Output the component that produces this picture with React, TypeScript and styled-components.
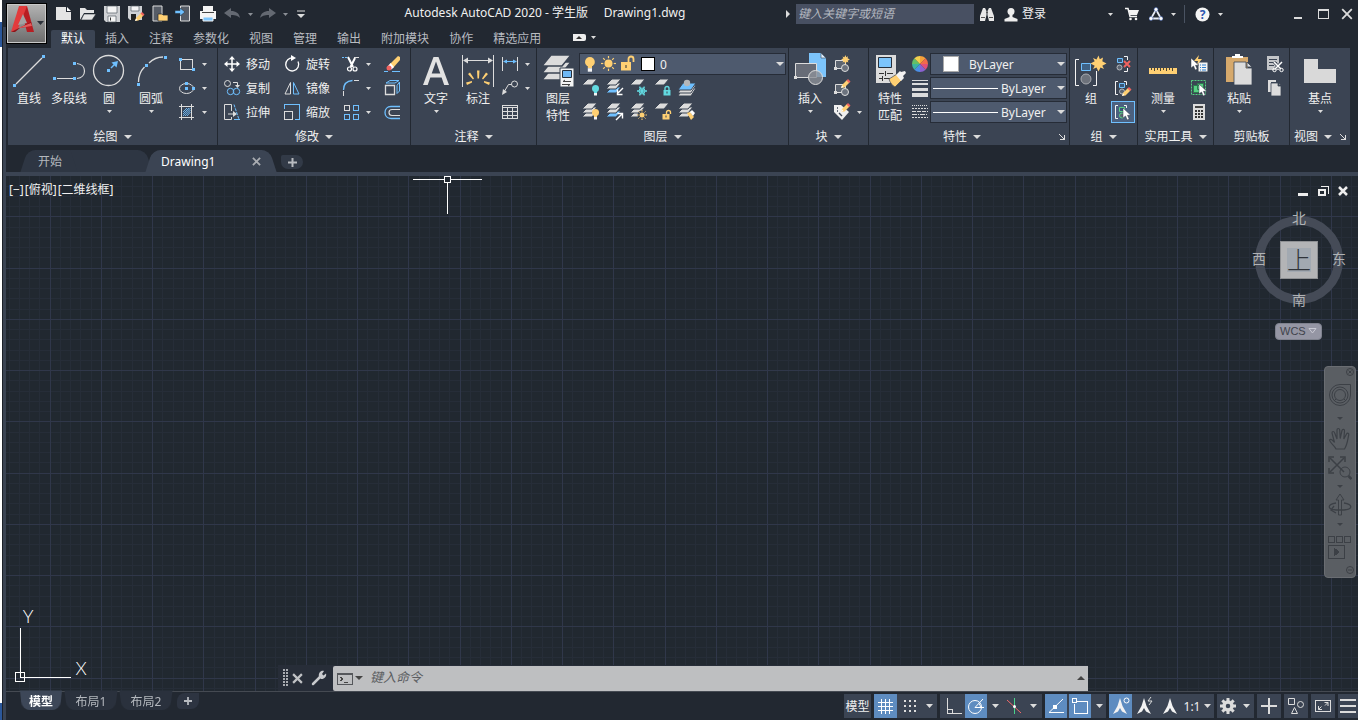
import React from "react";
import styled, { createGlobalStyle } from "styled-components";

const INK = "#dcdcdc";
const BLUE = "#6fc0ff";
const GOLD = "#ffd073";
const TEAL = "#62d9e0";
const SLATE = "#3b4453";
const NIGHT = "#222831";
const FIELD = "#4e5a6e";
const ACTIVE = "#5e8cc0";

const GlobalStyle = createGlobalStyle`
  * { box-sizing: border-box; }
  body {
    margin: 0;
    background: ${NIGHT};
    color: #f0f0f0;
    font: 12px/17px "Noto Sans", "Noto Sans CJK SC", sans-serif;
    overflow: hidden;
  }
  button, input, select { font: inherit; color: inherit; }
  button { border: 0; padding: 0; margin: 0; background: none; }
  svg { display: block; flex: none; }
`;

/* ---------- frame ---------- */

const Frame = styled.div`
  display: flex;
  height: 100vh;
`;
const EdgeStrip = styled.div`
  width: 2px;
  background: linear-gradient(#fff 22px, #2b579a 22px, #2b579a 47px, #fff 47px, #fff calc(100% - 17px), #2b579a calc(100% - 17px));
`;
const LeftRail = styled.div`
  width: 4px;
  margin-top: 27px;
  background: ${SLATE};
  border-left: 1px solid #1c2129;
`;
const Main = styled.div`
  flex: 1;
  min-width: 0;
  display: flex;
  flex-direction: column;
`;

/* ---------- header ---------- */

const Header = styled.header`
  display: flex;
  height: 48px;
`;
const AppButton = styled.button`
  width: 41px;
  height: 41px;
  margin-top: 3px;
  border: 1px solid #000;
  box-shadow: inset 0 0 0 1px #c9c9c9;
  background: linear-gradient(#b4b4b4, #8f8f8f 50%, #6c6c6c);
`;
const HeaderRows = styled.div`
  flex: 1;
  min-width: 0;
  display: flex;
  flex-direction: column;
`;
const TitleBar = styled.div`
  display: flex;
  align-items: center;
  height: 28px;
  padding-left: 5px;
`;
const Tool = styled.button<{ $w?: number }>`
  display: flex;
  align-items: center;
  justify-content: center;
  width: ${(p) => p.$w ?? 24}px;
  height: 24px;
`;
const Title = styled.h1`
  flex: 1;
  margin: 0;
  padding-bottom: 3px;
  font-size: 12px;
  font-weight: 400;
  text-align: center;
  white-space: pre;
`;
const SearchInput = styled.input`
  width: 178px;
  height: 20px;
  padding: 0 2px 2px;
  border: 0;
  background: #485062;
  &::placeholder { color: #b4b8c0; font-style: italic; opacity: 1; }
`;
const SignIn = styled.button`
  width: 80px;
  padding-bottom: 2px;
  text-align: left;
`;
const Divider = styled.span`
  width: 1px;
  height: 18px;
  margin: 0 5px;
  background: #4a5362;
`;
const WindowControls = styled.div`
  display: flex;
  margin-left: 60px;
`;
const RibbonTabs = styled.nav`
  display: flex;
  align-items: flex-end;
  height: 20px;
  padding-left: 4px;
`;
const RibbonTab = styled.button<{ $on?: boolean }>`
  height: 18px;
  padding: 0 10px 2px;
  border-radius: 2px 2px 0 0;
  color: ${(p) => (p.$on ? "#fff" : "#b9bcc1")};
  background: ${(p) => (p.$on ? SLATE : "none")};
`;
const MinimizeRibbon = styled.button`
  display: grid;
  place-items: center;
  width: 66px;
  height: 20px;
`;

/* ---------- ribbon ---------- */

const Ribbon = styled.section`
  display: flex;
  gap: 1px;
  height: 97px;
  padding-left: 2px;
`;
const PanelBox = styled.div<{ $w: number }>`
  flex: none;
  display: flex;
  flex-direction: column;
  width: ${(p) => p.$w}px;
  padding-top: 4px;
  background: ${SLATE};
`;
const PanelBody = styled.div<{ $pad?: number }>`
  display: flex;
  height: 76px;
  padding-left: ${(p) => p.$pad ?? 0}px;
`;
const PanelFooter = styled.div`
  display: flex;
  align-items: center;
  height: 17px;
`;
const FooterButton = styled.button`
  flex: 1;
  display: flex;
  align-items: center;
  justify-content: center;
  gap: 6px;
  white-space: nowrap;
`;
const Launcher = styled.button`
  width: 14px;
  height: 12px;
  display: grid;
  place-items: center;
`;
const BigButton = styled.button<{ $w?: number }>`
  display: flex;
  flex-direction: column;
  align-items: center;
  width: ${(p) => p.$w ?? 42}px;
  height: 76px;
  white-space: nowrap;
  & > svg:first-child { margin: 1px 0; }
`;
const ArrowSlot = styled.span`
  display: grid;
  place-items: center;
  height: 8px;
`;
const ToolGrid = styled.div<{ $cols: string; $left?: number }>`
  display: grid;
  grid-template-columns: ${(p) => p.$cols};
  grid-auto-rows: 24px;
  align-items: center;
  margin-left: ${(p) => p.$left ?? 0}px;
`;
const SmallButton = styled.button<{ $on?: boolean }>`
  display: flex;
  align-items: center;
  justify-content: ${(p) => (p.$on ? "center" : "flex-start")};
  gap: 5px;
  height: 22px;
  white-space: nowrap;
  ${(p) => p.$on && `width: 24px; margin-left: -3px; border: 1px solid ${BLUE}; background: #4b6180;`}
`;
const LayerTools = styled.div`
  flex: 1;
  padding-right: 2px;
`;
const IconRow = styled.div`
  display: flex;
`;
const Combo = styled.label`
  display: flex;
  align-items: center;
  height: 22px;
  margin: 1px 0;
  padding-right: 1px;
  border: 1px solid #262c37;
  background: ${FIELD};
`;
const ComboSelect = styled.select`
  appearance: none;
  flex: 1;
  min-width: 0;
  height: 20px;
  border: 0;
  padding: 0;
  margin-left: 3px;
  background: none;
`;
const Swatch = styled.span<{ $edge: string; $gap: string; $size: number }>`
  width: ${(p) => p.$size}px;
  height: ${(p) => p.$size}px;
  margin: ${(p) => p.$gap};
  border: 1px solid ${(p) => p.$edge};
  background: #fff;
`;
const Rule = styled.span`
  width: 65px;
  height: 1px;
  margin-left: 2px;
  background: #fff;
`;
const ComboStack = styled.div`
  flex: 1;
  display: grid;
  grid-auto-rows: 24px;
  padding-right: 2px;
  margin-left: 1px;
`;

/* ---------- document tabs ---------- */

const DocTabs = styled.nav`
  display: flex;
  align-items: flex-end;
  height: 26px;
  margin-top: 1px;
  padding-left: 18px;
`;
const DocTab = styled.div<{ $on?: boolean }>`
  position: relative;
  z-index: ${(p) => (p.$on ? 1 : 0)};
  display: flex;
  align-items: center;
  width: ${(p) => (p.$on ? 124 : 125)}px;
  height: 22px;
  padding: 0 12px 0 ${(p) => (p.$on ? 12 : 14)}px;
  color: ${(p) => (p.$on ? "#fff" : "#b4b8be")};
  &::before, &::after {
    content: "";
    position: absolute;
    z-index: -1;
    top: 0;
    bottom: 0;
    background: ${(p) => (p.$on ? SLATE : "#2e3643")};
  }
  &::before { left: 0; right: 40%; border-radius: 8px 0 0 0; transform: skewX(-18deg); }
  &::after { left: 40%; right: 0; border-radius: 0 8px 0 0; transform: skewX(18deg); }
`;
const DocName = styled.button`
  flex: 1;
  text-align: left;
`;
const AddTab = styled.button`
  display: grid;
  place-items: center;
  width: 22px;
  height: 14px;
  margin: 0 0 3px 8px;
  border-radius: 2px 8px 8px 8px;
  background: #323a47;
`;

/* ---------- drawing area ---------- */

const Canvas = styled.main`
  position: relative;
  flex: 1;
  min-height: 0;
  border-top: 4px solid ${SLATE};
  border-bottom: 1px solid #454a52;
  overflow: hidden;
`;
const GridSvg = styled.svg`
  width: 100%;
  height: 100%;
`;
const ViewLabel = styled.div`
  position: absolute;
  top: 5px;
  left: 3px;
  display: flex;
  gap: 1px;
`;
const Crosshair = styled.svg`
  position: absolute;
  left: 407px;
  top: 0;
`;
const UcsIcon = styled.svg`
  position: absolute;
  left: 8px;
  bottom: 3px;
  font: 300 18px/20px Lato, sans-serif;
`;
const DocControls = styled.div`
  position: absolute;
  top: 7px;
  right: 5px;
  display: flex;
  button { width: 20px; height: 16px; display: grid; place-items: center; }
`;
const ViewCube = styled.div`
  position: absolute;
  top: 33px;
  right: 9px;
  width: 100px;
  display: grid;
  grid-template: 20px 62px 20px / 20px 60px 20px;
  place-items: center;
  color: #b0b2b4;
  font-size: 14px;
`;
const Ring = styled.span`
  position: absolute;
  top: 7px;
  left: 6px;
  width: 88px;
  height: 88px;
  border: 9px solid #454b57;
  border-radius: 50%;
`;
const Heading = styled.span<{ $area: string }>`
  grid-area: ${(p) => p.$area};
  position: relative;
  padding-bottom: 3px;
`;
const TopFace = styled.button`
  grid-area: 2 / 2;
  position: relative;
  width: 38px;
  height: 38px;
  border: 1px solid #8f9194;
  background: linear-gradient(#a2a9b1, #a2a9b1) center / 24px 24px no-repeat #b3b4b6;
  color: #30343a;
  font-size: 24px;
  font-weight: 300;
  line-height: 32px;
`;
const WcsButton = styled.button`
  position: absolute;
  top: 147px;
  right: 36px;
  display: flex;
  align-items: center;
  justify-content: space-between;
  width: 47px;
  height: 17px;
  padding: 0 4px 2px 4px;
  border: 1px solid #7f828e;
  border-radius: 4px;
  background: #9596a4;
  color: #3f434b;
  font: 11px/14px "Liberation Sans", sans-serif;
`;
const NavBar = styled.nav`
  position: absolute;
  top: 190px;
  right: 2px;
  display: flex;
  flex-direction: column;
  align-items: center;
  width: 32px;
  height: 212px;
  border: 1px solid #6a6d72;
  border-radius: 4px;
  background: #5a5e63;
  color: #3c4046;
`;
const NavCorner = styled.button`
  display: grid;
  place-items: center;
  align-self: flex-end;
  width: 10px;
  height: 10px;
`;
const NavTool = styled.button<{ $h: number }>`
  display: grid;
  place-items: center;
  width: 30px;
  height: ${(p) => p.$h}px;
`;

const CommandLine = styled.div`
  position: absolute;
  left: 272px;
  right: 270px;
  bottom: 0;
  display: flex;
  align-items: center;
  height: 26px;
  padding-left: 3px;
  background: #272d38;
`;
const CommandField = styled.label`
  flex: 1;
  display: flex;
  align-items: center;
  height: 25px;
  padding: 0 3px;
  border-radius: 2px 0 0 2px;
  background: #bebfc1;
`;
const CommandInput = styled.input`
  flex: 1;
  min-width: 0;
  height: 22px;
  margin-left: 5px;
  padding: 0 0 2px;
  border: 0;
  background: none;
  color: #222;
  font-size: 13px;
  &::placeholder { color: #5c5e62; font-style: italic; opacity: 1; }
`;

/* ---------- bottom bar ---------- */

const BottomBar = styled.footer`
  display: flex;
  justify-content: space-between;
  height: 28px;
`;
const LayoutTabs = styled.nav`
  display: flex;
  gap: 1px;
  padding-left: 13px;
`;
const LayoutTab = styled.button<{ $on?: boolean }>`
  position: relative;
  z-index: 0;
  height: 18px;
  width: ${(p) => (p.$on ? 44 : 54)}px;
  padding-top: 1px;
  color: ${(p) => (p.$on ? "#fff" : "#b4b8be")};
  font-weight: ${(p) => (p.$on ? 700 : 400)};
  &::before {
    content: "";
    position: absolute;
    z-index: -1;
    inset: 0 3px;
    border-radius: 0 0 8px 8px;
    background: ${(p) => (p.$on ? "#3d4758" : "#2a313d")};
    transform: perspective(40px) rotateX(-12deg);
    transform-origin: bottom;
  }
`;
const AddLayout = styled.button`
  display: grid;
  place-items: center;
  width: 22px;
  height: 16px;
  margin: 1px 0 0 3px;
  border-radius: 8px 0 8px 4px;
  background: #2d3441;
`;
const StatusBar = styled.div`
  display: flex;
  gap: 3px;
  padding-top: 2px;
`;
const StatusGroup = styled.div<{ $gap?: number }>`
  display: flex;
  gap: ${(p) => p.$gap ?? 0}px;
  height: 24px;
  background: ${SLATE};
`;
const StatusButton = styled.button<{ $w: number; $on?: boolean }>`
  display: flex;
  align-items: center;
  justify-content: center;
  gap: 4px;
  width: ${(p) => p.$w}px;
  height: 24px;
  white-space: nowrap;
  background: ${(p) => (p.$on ? ACTIVE : "none")};
`;

/* ---------- drawing helpers ---------- */

type IcoProps = { w?: number; h?: number; crisp?: boolean; children: React.ReactNode };
const Ico = ({ w = 18, h = w, crisp, children }: IcoProps) => (
  <svg width={w} height={h} viewBox={`0 0 ${w} ${h}`} fill="none" stroke={INK} shapeRendering={crisp ? "crispEdges" : undefined} aria-hidden>
    {children}
  </svg>
);
const Big = ({ children, crisp }: { children: React.ReactNode; crisp?: boolean }) => (
  <Ico w={36} crisp={crisp}>{children}</Ico>
);
const Dot = ({ x, y }: { x: number; y: number }) => (
  <path d={`M${x} ${y}h3v3h-3z`} fill={BLUE} stroke="none" shapeRendering="crispEdges" />
);
const Down = ({ size = 5, color = INK }: { size?: number; color?: string }) => (
  <svg width={size} height={Math.ceil(size / 2)} viewBox="0 0 8 4" preserveAspectRatio="none" aria-hidden>
    <path d="M0 0h8L4 4z" fill={color} />
  </svg>
);
const Plus = ({ s = 9, color = "#b8bbc0" }: { s?: number; color?: string }) => (
  <svg width={s} height={s} viewBox="0 0 9 9" aria-hidden>
    <path d="M4.5 0v9M0 4.5h9" stroke={color} strokeWidth="2" />
  </svg>
);
const Cross = ({ s = 9, color = "#a9acb1", t = 2 }: { s?: number; color?: string; t?: number }) => (
  <svg width={s} height={s} viewBox="0 0 10 10" aria-hidden>
    <path d="M1 1l8 8M9 1L1 9" stroke={color} strokeWidth={t} />
  </svg>
);
const Pencil = ({ x = 0, y = 0 }: { x?: number; y?: number }) => (
  <g transform={`translate(${x} ${y})`} stroke="none">
    <path d="M0 9l1-3 5-5 2.500 2.500-5 5z" fill={GOLD} />
    <path d="M5.500 1.500L7 0l2.500 2.500L8 4z" fill="#f0625f" />
    <path d="M0 9l1-2.500 1.500 1.500z" fill="#fff" />
  </g>
);
const Cursor = ({ x, y }: { x: number; y: number }) => (
  <path transform={`translate(${x} ${y})`} d="M0 0v10l2.500-2 1.700 4 2-.900-1.700-3.800h3.300z" fill="#fff" stroke="#333b48" strokeWidth=".5" />
);
const Sheet = ({ y, fill = INK }: { y: number; fill?: string }) => (
  <path transform={`translate(0 ${y})`} d="M6 0h9l-5 6H0z" fill={fill} stroke={SLATE} strokeWidth="1" />
);
const Sheets = ({ last = INK }: { last?: string }) => (
  <>
    <Sheet y={8} fill={last} />
    <Sheet y={4} />
    <Sheet y={0} />
  </>
);
const Rays = ({ cx, cy, r, R, n = 8, color = GOLD, w = 1 }: { cx: number; cy: number; r: number; R: number; n?: number; color?: string; w?: number }) => (
  <g stroke={color} strokeWidth={w}>
    {Array.from({ length: n }, (_, i) => {
      const a = (i / n) * Math.PI * 2;
      return <line key={i} x1={cx + Math.cos(a) * r} y1={cy + Math.sin(a) * r} x2={cx + Math.cos(a) * R} y2={cy + Math.sin(a) * R} />;
    })}
  </g>
);
const Burst = ({ x, y, s = 1 }: { x: number; y: number; s?: number }) => (
  <path
    transform={`translate(${x} ${y}) scale(${s})`}
    d="M0-8l1.300 3.800L4.500-6 3.800-2.300 8 0 3.800 2.300 5.500 5.500 2 4 0 8-2 4-5.500 5.500-3.800 2.300-8 0-3.800-2.300-5.500-5.500-2-4z"
    fill={GOLD}
    stroke="none"
  />
);
const Padlock = ({ x, y, fill, open }: { x: number; y: number; fill: string; open?: boolean }) => (
  <g transform={`translate(${x} ${y})`}>
    <path d={open ? "M4.500 4V2.500a2 2 0 0 1 4 0V4" : "M2 4V2.500a2 2 0 0 1 4 0V4"} stroke={fill} strokeWidth="1.400" />
    <path d="M.5 4h7v5.500h-7z" fill={fill} stroke="none" />
    <path d="M4 5.500v2" stroke={SLATE} />
  </g>
);
const Bulb = ({ x, y, fill, s = 1 }: { x: number; y: number; fill: string; s?: number }) => (
  <g transform={`translate(${x} ${y}) scale(${s})`} stroke="none">
    <circle cx="3.500" cy="3.500" r="3.500" fill={fill} />
    <path d="M2 6h3v2H2z" fill={fill} />
    <path d="M2 8h3v2.500H2z" fill="#f4f4f4" />
  </g>
);

/* ---------- ribbon pieces ---------- */

const Panel = ({ w, title, arrow = true, launcher, pad, children }: { w: number; title: string; arrow?: boolean; launcher?: boolean; pad?: number; children: React.ReactNode }) => (
  <PanelBox $w={w}>
    <PanelBody $pad={pad}>{children}</PanelBody>
    <PanelFooter>
      <FooterButton>
        {title}
        {arrow && <Down size={8} />}
      </FooterButton>
      {launcher && (
        <Launcher aria-label={`${title}设置`}>
          <Ico w={6} crisp><path d="M0 0l5 5M5.500 1v5M1 5.500h5" /></Ico>
        </Launcher>
      )}
    </PanelFooter>
  </PanelBox>
);
const BigTool = ({ label, second, arrow, w, children }: { label: string; second?: string; arrow?: boolean; w?: number; children: React.ReactNode }) => (
  <BigButton $w={w}>
    {children}
    <span>{label}</span>
    {second && <span>{second}</span>}
    {arrow && <ArrowSlot><Down /></ArrowSlot>}
  </BigButton>
);
const Small = ({ name, text, on, children }: { name: string; text?: boolean; on?: boolean; children: React.ReactNode }) => (
  <SmallButton $on={on} aria-label={text ? undefined : name}>
    {children}
    {text && <span>{name}</span>}
  </SmallButton>
);
const More = ({ name }: { name: string }) => (
  <Tool $w={17} aria-label={name}><Down /></Tool>
);

const DrawPanel = () => (
  <Panel w={209} title="绘图">
    <BigTool label="直线">
      <Big><path d="M5 31L31 5" strokeWidth="1.300" /><Dot x={2} y={31} /><Dot x={31} y={2} /></Big>
    </BigTool>
    <BigTool label="多段线" w={38}>
      <Big><path d="M6 25.500h16M26 10.500c10 1 10 14 0 15" strokeWidth="1.200" /><Dot x={2} y={24} /><Dot x={22} y={24} /><Dot x={22} y={9} /></Big>
    </BigTool>
    <BigTool label="圆" arrow>
      <Big><circle cx="17.500" cy="17.500" r="15" strokeWidth="1.300" /><Dot x={16} y={16} /><path d="M20 15l5-5" stroke={BLUE} strokeWidth="1.500" /><path d="M27 8l-1.500 6.500-5-5z" fill={BLUE} stroke="none" /></Big>
    </BigTool>
    <BigTool label="圆弧" arrow>
      <Big><path d="M5.500 29c0-6 2-11 6-15M16 10c4-4 9-6 14-6" strokeWidth="1.300" /><Dot x={4} y={30} /><Dot x={12} y={11} /><Dot x={31} y={3} /></Big>
    </BigTool>
    <ToolGrid $cols="18px 17px" $left={6}>
      <Small name="矩形"><Ico crisp><path d="M2.500 4.500h12v10h-12z" /><Dot x={1} y={3} /><Dot x={14} y={13} /></Ico></Small>
      <More name="矩形选项" />
      <Small name="椭圆"><Ico><ellipse cx="8.500" cy="9.500" rx="7" ry="5" /><Dot x={7} y={3} /><Dot x={14} y={8} /><Dot x={7} y={8} /></Ico></Small>
      <More name="椭圆选项" />
      <Small name="图案填充"><Ico><path d="M1 3.500h15M1 14.500h15M3.500 1v16M13.500 1v16" shapeRendering="crispEdges" /><path d="M5 9l4-4M5 13l7.500-8M9 13l3.500-4M5 11l6-6M7 13l5.500-6" stroke={BLUE} strokeWidth=".9" /></Ico></Small>
      <More name="图案填充选项" />
    </ToolGrid>
  </Panel>
);

const ModifyPanel = () => (
  <Panel w={192} title="修改" pad={5}>
    <ToolGrid $cols="60px 59px 18px 23px 18px">
      <Small name="移动" text><Ico><path d="M9 3v12M3 9h12" strokeWidth="1.500" stroke="#fff" /><path d="M9 1l3 3.500H6zM9 17l3-3.500H6zM1 9l3.500-3v6zM17 9l-3.500-3v6z" fill="#fff" stroke="none" /></Ico></Small>
      <Small name="旋转" text><Ico><path d="M10 3a6.500 6.500 0 1 0 5 3.500" strokeWidth="1.300" stroke="#fff" /><path d="M8 0l5 3-5 3z" fill="#fff" stroke="none" /></Ico></Small>
      <Small name="修剪"><Ico><path d="M0 2.500h6" stroke={BLUE} strokeDasharray="2 1" /><path d="M12 2.500h5" /><path d="M6 2l5 10M13 3L8.500 12" stroke="#fff" strokeWidth="2" /><circle cx="7.500" cy="14" r="2" stroke="#fff" strokeWidth="1.200" /><circle cx="13" cy="14" r="2" stroke="#fff" strokeWidth="1.200" /></Ico></Small>
      <More name="修剪选项" />
      <Small name="删除"><Ico><path d="M7 9l8-8 2 1v3l-7 8z" fill={GOLD} stroke="none" /><path d="M5 11l2.500-3 3.500 4-2.500 2.500z" fill="#fff" stroke="none" /><circle cx="6" cy="13" r="2.500" fill="#f0625f" stroke="none" /><path d="M1 16.500h4M9 16.500h8" stroke={BLUE} /></Ico></Small>

      <Small name="复制" text><Ico><circle cx="4.500" cy="4.500" r="3" /><path d="M10 3.500h4.500V7" /><path d="M12 6h5l-2.500 3z" fill={INK} stroke="none" /><circle cx="7.500" cy="12.500" r="3.200" stroke={BLUE} /><circle cx="13.500" cy="12.500" r="3.200" stroke={BLUE} /></Ico></Small>
      <Small name="镜像" text><Ico><path d="M7.500 3.500v11.500H2z" /><path d="M10.500 3.500v11.500H16z" stroke={BLUE} /></Ico></Small>
      <Small name="圆角"><Ico><path d="M1.500 17v-5" /><path d="M1.500 11c0-6 3-9 9-9.500" stroke={BLUE} strokeWidth="1.300" /><path d="M12 1.500h5" /></Ico></Small>
      <More name="圆角选项" />
      <Small name="分解"><Ico><path d="M2.500 6.500h9v9h-9z" strokeWidth="1.300" /><path d="M3 4l4-2.500h9L12 4zM14 6.500L16.500 3v9L14 14.500z" stroke={BLUE} /></Ico></Small>

      <Small name="拉伸" text><Ico><path d="M8.500 8V1.500h-7v15h7V14M5 11h6" /><path d="M10 8l4 3-4 3z" fill={INK} stroke="none" /><path d="M11 1.500l5 15" stroke={BLUE} strokeDasharray="3 1" /><path d="M11 16.500h6" stroke={BLUE} /></Ico></Small>
      <Small name="缩放" text><Ico crisp><path d="M1.500 6V1.500h15v15H12" stroke={BLUE} /><path d="M1.500 8.500h8v8h-8z" /></Ico></Small>
      <Small name="阵列"><Ico crisp><path d="M2.500 2.500h5v5h-5z" /><path d="M11.500 2.500h5v5h-5zM2.500 11.500h5v5h-5zM11.500 11.500h5v5h-5z" stroke={BLUE} /></Ico></Small>
      <More name="阵列选项" />
      <Small name="偏移"><Ico><path d="M17 3.500H8c-8 0-8 12 0 12h9" stroke={BLUE} strokeWidth="1.300" /><path d="M17 6.500H9c-4 0-4 6 0 6h8" strokeWidth="1.200" /></Ico></Small>
    </ToolGrid>
  </Panel>
);

const AnnotatePanel = () => (
  <Panel w={125} title="注释" pad={4}>
    <BigTool label="文字" arrow>
      <Big><path d="M5 32L15.500 4h5L31 32h-4.800l-2.600-7.500H12.300L9.700 32zM13.700 20.500h8.600L18 8.500z" fill="#e2e2e2" stroke="none" fillRule="evenodd" /></Big>
    </BigTool>
    <BigTool label="标注">
      <Big><path d="M2.500 2v32M33.500 2v32M5 7.500h26" shapeRendering="crispEdges" /><path d="M3 7.500l5-3v6zM33 7.500l-5-3v6z" fill={INK} stroke="none" /><g fill={GOLD} stroke="none"><path d="M17 17.500h2.500l-.5 8h-1.500zM8 21l2-1.500 4 6-1 1zM28 21l-2-1.500-4 6 1 1zM6 29.500l6-1.500v1.500l-5 2.500zM30 29.500l-6-1.500v1.500l5 2.500z" /></g></Big>
    </BigTool>
    <ToolGrid $cols="18px 17px" $left={2}>
      <Small name="线性"><Ico><path d="M1.500 2v14M16.500 2v14" shapeRendering="crispEdges" /><path d="M4 6.500h10" stroke={BLUE} /><path d="M2 6.500l4-2v4zM16 6.500l-4-2v4z" fill={BLUE} stroke="none" /></Ico></Small>
      <More name="线性选项" />
      <Small name="引线"><Ico><circle cx="13.500" cy="5" r="3" /><path d="M10.500 5.500h-3L3 13" /><path d="M1 16l1-6 4 3z" fill={INK} stroke="none" /></Ico></Small>
      <More name="引线选项" />
      <Small name="表格"><Ico crisp><path d="M1.500 2.500h15v13h-15zM1.500 4.500h15M1.500 8.500h15M1.500 12.500h15M6.500 5v11M11.500 5v11" /></Ico></Small>
    </ToolGrid>
  </Panel>
);

const layerIcons: [string, React.ReactNode][][] = [
  [
    ["关闭图层", <><Sheet y={0} /><Bulb x={10} y={6} fill={TEAL} /></>],
    ["隔离图层", <><Sheets last={BLUE} /><path d="M17 9l-5 5M11.500 10.500v5h5" stroke="#fff" strokeWidth="1.400" /></>],
    ["冻结图层", <><Sheet y={0} /><Rays cx={12} cy={12} r={0} R={5} n={6} color={TEAL} w={1.500} /><circle cx="12" cy="12" r="3" stroke={TEAL} /></>],
    ["锁定图层", <><Sheet y={0} /><Padlock x={9} y={7} fill={TEAL} /></>],
    ["置为当前图层", <><path d="M5 9h13l-5 8H0z" fill={INK} stroke={SLATE} /><path d="M5 6h13l-5 8H0z" fill={INK} stroke={SLATE} /><path d="M5 4h13l-5 7H0z" fill={BLUE} stroke={SLATE} /><circle cx="9" cy="4" r="3.200" fill="#b5b7ba" stroke="none" /></>],
  ],
  [
    ["打开所有图层", <><Sheets /><Bulb x={10} y={6} fill={GOLD} /></>],
    ["取消隔离图层", <><Sheets last={BLUE} /><path d="M10 17l6-6M11.500 10.500h5v5" stroke="#fff" strokeWidth="1.400" /></>],
    ["解冻所有图层", <><Sheets /><circle cx="12" cy="12" r="4.500" fill={SLATE} stroke="none" /><circle cx="12" cy="12" r="2.500" fill={GOLD} stroke="none" /><Rays cx={12} cy={12} r={3.500} R={5} /></>],
    ["解锁图层", <><Sheet y={0} /><Padlock x={8} y={7} fill={GOLD} open /></>],
    ["匹配图层", <><Sheets /><path d="M9 10l3-1 4 5-3 3z" fill={GOLD} stroke="none" /><path d="M12 9l2-2 3 3-2 3z" fill="#fff" stroke="none" /></>],
  ],
];

const LayerPanel = () => (
  <Panel w={251} title="图层">
    <BigTool label="图层" second="特性">
      <Big>
        {[16, 9, 2].map((y) => (
          <path key={y} transform={`translate(0 ${y})`} d="M11 0h20l-9 11H2z" fill={INK} stroke={SLATE} strokeWidth="1.500" />
        ))}
        <path d="M20 15h14v19H20z" fill="#f4f4f4" stroke={SLATE} />
        <path d="M22.500 17.500h9v7h-9z" fill="#6fb8f5" stroke="#26303c" />
        <path d="M23 28.500h8M22 31.500h8M25 27l-2 1.500M28 33l2-1.500" stroke="#444" />
      </Big>
    </BigTool>
    <LayerTools>
      <Combo>
        <Ico w={62} h={20}>
          <Bulb x={5} y={3} fill={GOLD} s={1.400} />
          <circle cx="28.500" cy="9.500" r="4" fill={GOLD} stroke="none" />
          <Rays cx={28.500} cy={9.500} r={5.200} R={7.500} w={1.200} />
          <path d="M41 8h10v8.500H41z" fill={GOLD} stroke="none" />
          <path d="M48.500 8V5a2.500 2.500 0 0 1 5 0v3" stroke={GOLD} strokeWidth="1.800" />
          <path d="M46 11v3" stroke="#333" />
        </Ico>
        <Swatch $edge="#000" $size={14} $gap="0 2px 0 -1px" />
        <ComboSelect aria-label="图层"><option>0</option></ComboSelect>
        <Down size={8} />
      </Combo>
      {layerIcons.map((row, i) => (
        <IconRow key={i}>
          {row.map(([name, art]) => (
            <Tool key={name} aria-label={name}><Ico>{art}</Ico></Tool>
          ))}
        </IconRow>
      ))}
    </LayerTools>
  </Panel>
);

const BlockArt = () => (
  <>
    <path d="M2.500 5.500h10v8h-10z" fill="#5c6470" />
    <circle cx="12" cy="13" r="3.500" fill="#6b727d" />
    <path d="M1 12h3v3H1z" fill={INK} stroke="none" />
  </>
);
const BlockPanel = () => (
  <Panel w={79} title="块">
    <BigTool label="插入" arrow>
      <Big>
        <path d="M17 0h12l5 5v19H17z" fill="#7cc4fb" stroke="none" />
        <path d="M29 0v5h5z" fill="#dff0ff" stroke={SLATE} strokeWidth=".6" />
        <path d="M3.500 10.500h21v14h-21z" fill="#676c77" />
        <circle cx="23.500" cy="24.500" r="7" fill="#8c9097" fillOpacity=".8" />
        <path d="M2 23h3v3H2z" fill={INK} stroke="none" />
      </Big>
    </BigTool>
    <ToolGrid $cols="18px 17px" $left={2}>
      <Small name="创建块"><Ico><BlockArt /><Burst x={12.500} y={4.500} s={0.550} /></Ico></Small><span />
      <Small name="编辑块"><Ico><BlockArt /><Pencil x={8} y={0} /></Ico></Small><span />
      <Small name="编辑属性"><Ico><path d="M1 2h7l8 7-7 8-8-8z" fill="#f0f0f0" stroke="none" /><path d="M4 5h1M4 8h1M6 10l3 3" stroke={SLATE} strokeWidth="1.400" /><Pencil x={8} y={0} /></Ico></Small>
      <More name="块属性选项" />
    </ToolGrid>
  </Panel>
);

const wheel = ["#f6a13a", "#f26a4b", "#e04f7a", "#8a62d0", "#4b8fe6", "#3cb5a0", "#63c067", "#f3d04e"];
const PropertiesPanel = () => (
  <Panel w={200} title="特性" launcher>
    <BigTool label="特性" second="匹配">
      <Big>
        <path d="M4 2h20v28H4z" fill={INK} stroke="none" />
        <path d="M6.500 4.500h13v10h-13z" fill="#7cc4fb" stroke="#26303c" />
        <path d="M7 20.500h5M15 20.500h6M7 25.500h3M12 25.500h6M13.500 18v5M10.500 23v5" stroke="#333" />
        <path d="M17 26l8-5 5 6-7 7c-2-1-5-4-6-8z" fill={GOLD} stroke={SLATE} strokeWidth=".7" />
        <path d="M24 22l4-4 1 1 4-1 1 2-3 3 1 2-3 3z" fill="#f2f2f2" stroke="none" />
      </Big>
    </BigTool>
    <ToolGrid $cols="18px">
      <Small name="对象颜色">
        <Ico>
          {wheel.map((c, i) => {
            const p = (k: number) => `${9 + 8 * Math.sin((k * Math.PI) / 4)} ${9 - 8 * Math.cos((k * Math.PI) / 4)}`;
            return <path key={c} d={`M9 9L${p(i)}A8 8 0 0 1 ${p(i + 1)}z`} fill={c} stroke="none" />;
          })}
        </Ico>
      </Small>
      <Small name="线宽"><Ico crisp><path d="M1 1.500h16" /><path d="M1 5h16" strokeWidth="2" /><path d="M1 10h16" strokeWidth="3" /><path d="M1 15.500h16" strokeWidth="4" /></Ico></Small>
      <Small name="线型"><Ico crisp><path d="M1 2.500h16" strokeDasharray="1 1" /><path d="M1 5.500h16" strokeDasharray="2 1" /><path d="M1 8.500h16" strokeDasharray="4 1" /><path d="M1 11.500h16" strokeDasharray="5 1 1 1" /><path d="M1 14.500h16" strokeDasharray="2 1" /></Ico></Small>
    </ToolGrid>
    <ComboStack>
      <Combo><Swatch $edge="#aaa" $size={16} $gap="0 7px 0 12px" /><ComboSelect aria-label="颜色"><option>ByLayer</option></ComboSelect><Down size={8} /></Combo>
      <Combo><Rule /><ComboSelect aria-label="线宽"><option>ByLayer</option></ComboSelect><Down size={8} /></Combo>
      <Combo><Rule /><ComboSelect aria-label="线型"><option>ByLayer</option></ComboSelect><Down size={8} /></Combo>
    </ComboStack>
  </Panel>
);

const GroupArt = ({ color = BLUE }: { color?: string }) => (
  <>
    <path d="M4 2.500H1.500v13H4" stroke="#f4f4f4" />
    <path d="M5.500 4.500h5v4h-5z" stroke={color} fill="#3a5878" />
    <circle cx="8" cy="12.500" r="2.500" stroke={color === BLUE ? "#b5b8bd" : color} fill="#5d6572" />
  </>
);
const GroupPanel = () => (
  <Panel w={67} title="组">
    <BigTool label="组">
      <Big>
        <path d="M6 6.500H2.500v26H6M20 32.500h3.500V18" stroke="#f4f4f4" />
        <path d="M8.500 10.500h9v7h-9z" stroke={BLUE} fill="#3f6285" />
        <circle cx="13" cy="26" r="5" fill="#6d727b" stroke="#a9acb1" />
        <Burst x={25.500} y={10.500} />
      </Big>
    </BigTool>
    <ToolGrid $cols="18px" $left={2}>
      <Small name="解除编组"><Ico><path d="M3.500 3.500h5v4h-5z" stroke={BLUE} fill="#3a5878" /><circle cx="5.500" cy="12.500" r="2.500" fill="#5d6572" stroke="#b5b8bd" /><path d="M10 1.500h3.500V5M13.500 13v3.500H10" stroke="#f4f4f4" /><path d="M10 6l6 6M16 6l-6 6" stroke="#f0625f" strokeWidth="2" /></Ico></Small>
      <Small name="组编辑"><Ico><GroupArt /><path d="M10 2.500h2.500V6" stroke="#f4f4f4" /><Pencil x={8} y={8} /></Ico></Small>
      <Small name="启用组选择" on><Ico><GroupArt color="#57cf83" /><path d="M10 2.500h2.500V5" stroke="#f4f4f4" /><Cursor x={9} y={5} /></Ico></Small>
    </ToolGrid>
  </Panel>
);

const UtilityPanel = () => (
  <Panel w={75} title="实用工具" pad={4}>
    <BigTool label="测量" arrow>
      <Big crisp><path d="M4 15h28v6H4z" fill={GOLD} stroke="none" /><path d="M6.500 15v2M9.500 15v3M12.500 15v2M15.500 15v3M18.500 15v2M21.500 15v3M24.500 15v2M27.500 15v3" stroke="#4a4636" /></Big>
    </BigTool>
    <ToolGrid $cols="18px" $left={6}>
      <Small name="快速选择"><Ico><path d="M9 0L4 6h4l-1 4 5-6H8z" fill={GOLD} stroke="none" /><path d="M8.500 7.500h9v9h-9z" fill="#f4f4f4" stroke="none" /><path d="M10 10h1M10 12.500h1M10 15h1M12 10h4M12 12.500h4M12 15h4" stroke="#2d7fd0" /><Cursor x={1} y={3} /></Ico></Small>
      <Small name="全部选择"><Ico><path d="M1.500 1.500h14v14h-14z" stroke="#57cf83" strokeDasharray="2 1" /><path d="M3.500 6.500h7v7h-7zM7.500 4.500h6v6h-6z" fill="#57cf83" stroke="#2c7a4d" /><Cursor x={9} y={5} /></Ico></Small>
      <Small name="快速计算器"><Ico crisp><path d="M3 1h12v16H3z" fill={INK} stroke="none" /><path d="M5 4h8" stroke="#444" strokeWidth="2" /><path d="M5 8h8M5 11h8M5 14h8" stroke="#333" strokeWidth="2" strokeDasharray="2 1" /></Ico></Small>
    </ToolGrid>
  </Panel>
);

const Page = ({ x, y, w, h }: { x: number; y: number; w: number; h: number }) => {
  const f = Math.round(w / 3);
  return <path d={`M${x} ${y}h${w - f}v${f}h${f}v${h - f}h${-w}zM${x + w - f + 1} ${y}v${f - 1}h${f - 1}z`} fill={INK} stroke={SLATE} strokeWidth=".8" />;
};
const ClipboardPanel = () => (
  <Panel w={75} title="剪贴板" arrow={false} pad={4}>
    <BigTool label="粘贴" arrow>
      <Big><path d="M5 4h22v25H5z" fill="#d6a96c" stroke="none" /><path d="M11 5V3h3V1h5v2h3v2z" fill="#fff" stroke="none" /><Page x={13} y={9} w={18} h={23} /></Big>
    </BigTool>
    <ToolGrid $cols="18px" $left={6}>
      <Small name="剪切"><Ico><path d="M1 1h12v14H1z" fill="#c4c6c9" stroke="none" /><path d="M3 4.500h8M3 7.500h8M3 10.500h5" stroke={SLATE} /><path d="M8 7l7 7M16 7l-7 7" stroke={SLATE} strokeWidth="3" /><path d="M8 7l7 7M16 7l-7 7" stroke="#fff" strokeWidth="1.500" /><circle cx="8.500" cy="15" r="1.700" stroke="#fff" /><circle cx="15.500" cy="15" r="1.700" stroke="#fff" /></Ico></Small>
      <Small name="复制剪裁"><Ico><path d="M2 1h8v2H5v10H2z" fill={INK} stroke="none" /><Page x={5} y={4} w={10} h={13} /></Ico></Small>
    </ToolGrid>
  </Panel>
);

const ViewPanel = () => (
  <Panel w={60} title="视图" launcher pad={9}>
    <BigTool label="基点" arrow>
      <Big crisp><path d="M2 6h14v10h18v14H2z" fill="#d9d9d9" stroke="none" /></Big>
    </BigTool>
  </Panel>
);

/* ---------- header pieces ---------- */

const quickTools: [string, React.ReactNode][] = [
  ["新建", <><path d="M1 2h10v5h5v8H1z" fill="#e4e4e4" stroke="none" /><path d="M12 2l4 4h-4z" fill="#fff" stroke="none" /></>],
  ["打开", <><path d="M1 15V3h5l2 2h7v3H5z" fill="#e4e4e4" stroke="none" /><path d="M5 9h12l-4 6H2z" fill="#e4e4e4" stroke={NIGHT} strokeWidth=".6" /></>],
  ["保存", <><path d="M1 1h16v16H3l-2-2z" fill="#cfd1d4" stroke="none" /><path d="M4 1h10v7H4z" fill="#f4f4f4" stroke="#555b66" strokeWidth=".7" /><path d="M5 11h8v6H5z" fill="#f4f4f4" stroke="#555b66" strokeWidth=".7" /><path d="M7.500 12.500v3" stroke="#333" /></>],
  ["另存为", <><path d="M1 1h14v14H3l-2-2z" fill="#cfd1d4" stroke="none" /><path d="M4 1h8v5H4z" fill="#f4f4f4" stroke="#555b66" strokeWidth=".7" /><path d="M4 9h5v6H4z" fill="#222" stroke="none" /><Pencil x={8} y={7} /></>],
  ["从移动设备打开", <><path d="M2 1h9v15H2z" fill="#565c66" stroke="#dcdcdc" /><path d="M7 9h4l1 1h5v6H7z" fill={GOLD} stroke={NIGHT} strokeWidth=".7" /></>],
  ["保存到移动设备", <><path d="M5.500 1h9v15h-9z" fill="#565c66" stroke="#dcdcdc" /><path d="M0 5.500h5V3l5 4-5 4V8.500H0z" fill={BLUE} stroke={NIGHT} strokeWidth=".5" /></>],
  ["打印", <><path d="M4 1h10v5H4zM1 6h16v8H1z" fill="#f4f4f4" stroke="none" /><path d="M3 7.500h12" stroke="#444" /><path d="M4 12h10v4H4z" fill="#7cc4fb" stroke="#f4f4f4" /></>],
];

const AppLogo = () => (
  <Ico w={39}>
    <path d="M13 2h7l7 26h-7z" fill="#b81d22" stroke="none" />
    <path d="M12 2h8l-9 23-7 3z" fill="#e23b3c" stroke="none" />
    <path d="M4 28l20-10 1 4-12 2-5 4z" fill="#8f1318" stroke="none" />
    <path d="M16 10l4 9-9 2z" fill="#a3a3a3" stroke="none" />
    <path d="M11 24l13-5 1 3-12 2z" fill="#e65a5a" stroke="none" />
    <path d="M30 17h7l-3.500 4z" fill="#2c313a" stroke="none" />
  </Ico>
);

const ribbonTabs = ["默认", "插入", "注释", "参数化", "视图", "管理", "输出", "附加模块", "协作", "精选应用"];

const TopHeader = () => (
  <Header>
    <AppButton aria-label="应用程序菜单"><AppLogo /></AppButton>
    <HeaderRows>
      <TitleBar>
        {quickTools.map(([name, art]) => (
          <Tool key={name} aria-label={name}><Ico>{art}</Ico></Tool>
        ))}
        <Tool aria-label="放弃"><Ico><path d="M1 8l7-5v3c5 0 8 2 9 7-2-2-4-3-9-3v3z" fill="#646972" stroke="none" /></Ico></Tool>
        <Tool $w={12} aria-label="放弃列表"><Down color="#8b8f96" /></Tool>
        <Tool aria-label="重做"><Ico><path d="M17 8l-7-5v3c-5 0-8 2-9 7 2-2 4-3 9-3v3z" fill="#646972" stroke="none" /></Ico></Tool>
        <Tool $w={11} aria-label="重做列表"><Down color="#8b8f96" /></Tool>
        <Tool $w={20} aria-label="自定义快速访问工具栏"><Ico w={8} h={8}><path d="M0 1h8" /><path d="M0 4h8L4 8z" fill={INK} stroke="none" /></Ico></Tool>
        <Title>{"Autodesk AutoCAD 2020 - 学生版     Drawing1.dwg"}</Title>
        <Tool $w={17} aria-label="折叠搜索"><Ico w={4} h={8}><path d="M0 0l4 4-4 4z" fill={INK} stroke="none" /></Ico></Tool>
        <SearchInput type="search" placeholder="键入关键字或短语" aria-label="搜索" />
        <Tool $w={26} aria-label="查找"><Ico w={14} h={14}><path d="M3 1h2l1.500 3v4L5 14H0V9zM11 1H9L7.500 4v4L9 14h5V9z" fill="#e8e8e8" stroke="none" /><path d="M6 5.500h2M1 10.500h4M9 10.500h4" stroke="#555" /></Ico></Tool>
        <Tool $w={22} aria-label="用户"><Ico w={14} h={15}><circle cx="7" cy="4.500" r="3.500" fill="#eee" stroke="none" /><path d="M5.500 7h3v3l5 2v2.500H.5V12l5-2z" fill="#eee" stroke="none" /></Ico></Tool>
        <SignIn>登录</SignIn>
        <Tool $w={17} aria-label="登录选项"><Down /></Tool>
        <Tool $w={26} aria-label="App Store"><Ico w={14} h={14}><path d="M0 1.500h3l2 8h7" strokeWidth="1.500" stroke="#f4f4f4" /><path d="M3.500 3H14l-2 5H5z" fill="#f4f4f4" stroke="none" /><circle cx="5.500" cy="12" r="1.300" fill="#f4f4f4" stroke="none" /><circle cx="11" cy="12" r="1.300" fill="#f4f4f4" stroke="none" /></Ico></Tool>
        <Tool $w={22} aria-label="保持连接"><Ico w={14} h={14}><path d="M7 2.500l5 9H2z" stroke="#e8ecf5" strokeWidth="1.800" /><circle cx="7" cy="2.500" r="2" fill="#fff" stroke="#3b5ba8" strokeWidth=".6" /><circle cx="2" cy="11.500" r="2" fill="#fff" stroke="#3b5ba8" strokeWidth=".6" /><circle cx="12" cy="11.500" r="2" fill="#fff" stroke="#3b5ba8" strokeWidth=".6" /></Ico></Tool>
        <Tool $w={12} aria-label="连接选项"><Down /></Tool>
        <Divider />
        <Tool $w={24} aria-label="帮助">
          <Ico w={15}><circle cx="7.500" cy="7.500" r="7" fill="#f4f4f4" stroke="none" /><text x="7.500" y="12" textAnchor="middle" fontSize="12" fontWeight="700" fill="#2d56b0" stroke="none">?</text></Ico>
        </Tool>
        <Tool $w={12} aria-label="帮助选项"><Down /></Tool>
        <WindowControls>
          <Tool aria-label="最小化"><Ico w={12} crisp><path d="M2 10h8" strokeWidth="2" /></Ico></Tool>
          <Tool $w={26} aria-label="最大化"><Ico w={12} crisp><path d="M1.500 1.500h10v9h-10z" /><path d="M1 2h11" /></Ico></Tool>
          <Tool $w={22} aria-label="关闭"><Cross s={12} color={INK} t={1.500} /></Tool>
        </WindowControls>
      </TitleBar>
      <RibbonTabs>
        {ribbonTabs.map((t, i) => <RibbonTab key={t} $on={i === 0}>{t}</RibbonTab>)}
        <MinimizeRibbon aria-label="最小化功能区">
          <Ico w={24} h={8}><path d="M1 0h11a2 2 0 0 1 2 2v3a2 2 0 0 1-2 2H1z" fill="#eee" stroke="none" /><path d="M4 5l3-3 3 3z" fill="#333" stroke="none" /><path d="M19 2h5l-2.500 3z" fill={INK} stroke="none" /></Ico>
        </MinimizeRibbon>
      </RibbonTabs>
    </HeaderRows>
  </Header>
);

/* ---------- drawing area pieces ---------- */

const TILE = 205;
const DrawingGrid = () => {
  const steps = Array.from({ length: 20 }, (_, i) => ({ at: Math.floor((i * TILE) / 20) + 0.5, major: i % 5 === 0 }));
  const draw = (major: boolean) =>
    steps.filter((s) => s.major === major).map((s) => <path key={s.at} d={`M${s.at} 0V${TILE}M0 ${s.at}H${TILE}`} stroke={major ? "#30374a" : "#262d38"} />);
  return (
    <GridSvg aria-hidden>
      <defs>
        <pattern id="grid" width={TILE} height={TILE} x={44} y={92} patternUnits="userSpaceOnUse">
          {draw(false)}
          {draw(true)}
        </pattern>
      </defs>
      <rect width="100%" height="100%" fill="#212830" />
      <rect width="100%" height="100%" fill="url(#grid)" />
    </GridSvg>
  );
};

const NavArrow = () => <NavTool $h={10} aria-label="更多导航选项"><Down color="#3c4046" size={6} /></NavTool>;
const Navigation = () => (
  <NavBar aria-label="导航栏">
    <NavCorner aria-label="关闭导航栏"><Ico w={8}><circle cx="4" cy="4" r="3.500" stroke="currentColor" /><path d="M2.500 2.500l3 3M5.500 2.500l-3 3" stroke="currentColor" /></Ico></NavCorner>
    <NavTool $h={36} aria-label="全导航控制盘"><Ico w={24}><g stroke="currentColor"><path d="M12 1.500h10.500V12A10.500 10.500 0 1 1 12 1.500z" /><circle cx="12" cy="12" r="8" /><circle cx="12" cy="12" r="5.500" /><path d="M8 16l-2 2M16 16l2 2" /></g></Ico></NavTool>
    <NavArrow />
    <NavTool $h={32} aria-label="平移"><Ico w={24}><path d="M8 22C6 18 2 16 1.500 13c1.500-1.500 3 0 5 2.500L4 6c0-2 2-2 2.700 0L9 12V3c0-2 2.500-2 2.700 0l.5 8.500L14 3.500c.5-1.700 2.800-1.300 2.500.5L15.800 12l2.700-5c1-1.500 2.800-.5 2.200 1-1 4-1 9-4.200 14z" stroke="currentColor" strokeWidth="1.200" /></Ico></NavTool>
    <NavTool $h={26} aria-label="范围缩放"><Ico w={24}><g stroke="currentColor"><path d="M2 2l14 14M16 2L2 16" strokeWidth="1.500" /><path d="M1 6V1h5M12 1h5v5M1 12v5h5" strokeWidth="1.500" /><circle cx="17" cy="16" r="5" /><path d="M20.500 20l3 3" strokeWidth="2.500" /></g></Ico></NavTool>
    <NavArrow />
    <NavTool $h={28} aria-label="动态观察"><Ico w={24}><g stroke="currentColor"><path d="M10.500 22V7H8l4-6 4 6h-2.500v15z" /><path d="M8 10c-9 1.500-9 6 0 7h8c9-1 9-5.500 0-7M6 13l-3 4 5 3" strokeWidth="1.300" /></g></Ico></NavTool>
    <NavArrow />
    <NavTool $h={36} aria-label="ShowMotion"><Ico w={24} h={26} crisp><g stroke="currentColor"><path d="M.5 2.500h6v6h-6zM8.500 2.500h6v6h-6zM16.500 2.500h6v6h-6zM.5 11.500h16v13h-16z" /><path d="M6 14v8l5-4z" fill="currentColor" /></g></Ico></NavTool>
    <NavCorner aria-label="导航栏选项"><Ico w={8}><circle cx="4" cy="4" r="3.500" stroke="currentColor" /><path d="M2 4h4" stroke="currentColor" /></Ico></NavCorner>
  </NavBar>
);

const DrawingArea = () => (
  <Canvas>
    <DrawingGrid />
    <ViewLabel><button>[−]</button><button>[俯视]</button><button>[二维线框]</button></ViewLabel>
    <Crosshair width="70" height="38" viewBox="0 0 70 38" fill="none" stroke="#fff" shapeRendering="crispEdges">
      <path d="M0 3.500h31M38 3.500h31M34.500 7v31M31.500.5h6v6h-6z" />
    </Crosshair>
    <DocControls>
      <button aria-label="最小化图形"><Ico w={12} crisp><path d="M1 9h10" stroke="#eee" strokeWidth="3" /></Ico></button>
      <button aria-label="还原图形"><Ico w={12} crisp><path d="M4 1.500h7.500V9" stroke="#eee" /><path d="M2 5h6v5H2z" stroke="#eee" strokeWidth="2" /></Ico></button>
      <button aria-label="关闭图形"><Cross s={10} color="#eee" t={2.500} /></button>
    </DocControls>
    <ViewCube>
      <Ring />
      <Heading $area="1 / 2">北</Heading>
      <Heading $area="2 / 1">西</Heading>
      <TopFace>上</TopFace>
      <Heading $area="2 / 3">东</Heading>
      <Heading $area="3 / 2">南</Heading>
    </ViewCube>
    <WcsButton>WCS<Ico w={9} h={6}><path d="M1 .500h7L4.500 5z" stroke="#c9cad3" /></Ico></WcsButton>
    <Navigation />
    <UcsIcon width="84" height="92" viewBox="0 -12 84 92" fill="none" stroke="#fff">
      <path d="M6.500 20v45M11 69.500h46M1.500 64.500h9v9h-9zM6.500 65v4.500H11" shapeRendering="crispEdges" />
      <text x="14" y="15" textAnchor="middle" fill="#fff" stroke="none">Y</text>
      <text x="67" y="67" textAnchor="middle" fill="#fff" stroke="none">X</text>
    </UcsIcon>
    <CommandLine>
      <Ico w={8} h={18} crisp><path d="M3 0v18M6 0v18" stroke="#a9acb1" strokeWidth="2" strokeDasharray="2 1" /></Ico>
      <Tool $w={16} aria-label="关闭命令行"><Cross s={11} color="#c0c2c5" /></Tool>
      <Tool $w={28} aria-label="自定义命令行"><Ico w={16}><path d="M2 14l7-7" stroke="#c8cacd" strokeWidth="2.500" strokeLinecap="round" /><path d="M8 7c-1-4 2-7 5-6l-2 3 1.500 1.500L15 3.500c1 3-2 6-5 5.500z" fill="#c8cacd" stroke="none" /></Ico></Tool>
      <CommandField>
        <Ico w={17} h={13} crisp><path d="M1.500 1.500h15v11h-15z" stroke="#55575b" /><path d="M1 2h16" stroke="#55575b" strokeWidth="2" /><path d="M4 5l3 2-3 2M8 10.500h4" stroke="#444" /></Ico>
        <Tool $w={12} aria-label="最近使用的命令"><Down size={8} color="#444" /></Tool>
        <CommandInput placeholder="键入命令" aria-label="命令" />
        <Ico w={8} h={4}><path d="M0 4h8L4 0z" fill="#444" stroke="none" /></Ico>
      </CommandField>
    </CommandLine>
  </Canvas>
);

/* ---------- status bar pieces ---------- */

const Needle = ({ x = 0 }: { x?: number }) => (
  <path d="M10 2l2.500 8 4.500 8-5-2.500L10 12l-2 3.500L3 18l4.500-8z" transform={`translate(${x} 0)`} fill="#f2f2f2" stroke="none" />
);

const Status = () => (
  <StatusBar>
    <StatusGroup><StatusButton $w={27}>模型</StatusButton></StatusGroup>
    <StatusGroup>
      <StatusButton $w={23} $on aria-label="栅格"><Ico w={17} crisp><path d="M4.500 1v15M8.500 1v15M12.500 1v15M1 4.500h15M1 8.500h15M1 12.500h15" stroke="#fff" /></Ico></StatusButton>
      <StatusButton $w={25} aria-label="捕捉模式"><Ico w={16} crisp><path d="M3 2v14M8 2v14M13 2v14" strokeWidth="2" strokeDasharray="2 3" /></Ico></StatusButton>
      <StatusButton $w={15} aria-label="捕捉选项"><Down size={7} /></StatusButton>
    </StatusGroup>
    <StatusGroup>
      <StatusButton $w={25} aria-label="正交"><Ico crisp><path d="M3.500 1v15.500H18M3.500 12.500h5v4" /></Ico></StatusButton>
      <StatusButton $w={22} $on aria-label="极轴追踪"><Ico><circle cx="8" cy="10" r="6.500" stroke="#fff" /><path d="M16 2L8 10.500h9M8 10.500m4-4a6 6 0 0 1 1.500 4" stroke="#fff" /></Ico></StatusButton>
      <StatusButton $w={16} aria-label="极轴选项"><Down size={7} /></StatusButton>
      <StatusButton $w={22} aria-label="等轴测草图"><Ico><path d="M9.500 1v16" stroke="#4ad08a" /><path d="M2 3l14 13" stroke="#f06a6a" /><circle cx="9.500" cy="9.500" r="1.500" fill="#fff" stroke="none" /></Ico></StatusButton>
      <StatusButton $w={17} aria-label="等轴测选项"><Down size={7} /></StatusButton>
    </StatusGroup>
    <StatusGroup $gap={2}>
      <StatusButton $w={22} $on aria-label="对象捕捉追踪"><Ico><path d="M16 2L2 15.500h15" stroke="#fff" /><path d="M6 8h4v4H6z" fill="#fff" stroke="none" /></Ico></StatusButton>
      <StatusButton $w={22} $on aria-label="对象捕捉"><Ico crisp><path d="M6 4.500h10.500v12H3.500V7" stroke="#fff" /><path d="M1.500 1.500h4v4h-4z" stroke="#fff" /></Ico></StatusButton>
      <StatusButton $w={13} aria-label="对象捕捉选项"><Down size={7} /></StatusButton>
    </StatusGroup>
    <StatusGroup>
      <StatusButton $w={23} $on aria-label="显示注释对象"><Ico w={20}><Needle x={-1} /><circle cx="15.500" cy="4.500" r="2.500" stroke="#fff" /></Ico></StatusButton>
      <StatusButton $w={26} aria-label="自动缩放"><Ico w={20}><Needle x={-1} /><path d="M16 1l-3 4h4l-3 4" /></Ico></StatusButton>
      <StatusButton $w={23} aria-label="注释比例"><Ico w={20}><Needle /></Ico></StatusButton>
      <StatusButton $w={33}>1:1<Down size={7} /></StatusButton>
    </StatusGroup>
    <StatusGroup>
      <StatusButton $w={22} aria-label="切换工作空间"><Ico w={16}><circle cx="8" cy="8" r="4" strokeWidth="3.500" /><Rays cx={8} cy={8} r={5} R={8} color={INK} w={3} /></Ico></StatusButton>
      <StatusButton $w={15} aria-label="工作空间选项"><Down size={7} /></StatusButton>
    </StatusGroup>
    <StatusGroup><StatusButton $w={24} aria-label="注释监视器"><Ico w={16} crisp><path d="M8 0v16M0 8h16" strokeWidth="2" /></Ico></StatusButton></StatusGroup>
    <StatusGroup><StatusButton $w={24} aria-label="隔离对象"><Ico><path d="M1.500 1.500h6v6h-6zM7.500 10.500l3 6h-6z" /><circle cx="13.500" cy="7.500" r="3" /></Ico></StatusButton></StatusGroup>
    <StatusGroup><StatusButton $w={24} aria-label="全屏显示"><Ico><path d="M1.500 3.500h15v11h-15z" shapeRendering="crispEdges" /><path d="M4.500 9v3.500H8M4.500 12.500l3-3M10.500 5.500H14V9M14 5.500l-3 3" /></Ico></StatusButton></StatusGroup>
    <StatusGroup><StatusButton $w={20} aria-label="自定义"><Ico w={16} crisp><path d="M0 2h16M0 8h16M0 14h16" strokeWidth="2" /></Ico></StatusButton></StatusGroup>
  </StatusBar>
);

export default function App() {
  return (
    <Frame>
      <GlobalStyle />
      <EdgeStrip />
      <LeftRail />
      <Main>
        <TopHeader />
        <Ribbon>
          <DrawPanel />
          <ModifyPanel />
          <AnnotatePanel />
          <LayerPanel />
          <BlockPanel />
          <PropertiesPanel />
          <GroupPanel />
          <UtilityPanel />
          <ClipboardPanel />
          <ViewPanel />
        </Ribbon>
        <DocTabs>
          <DocTab><DocName>开始</DocName></DocTab>
          <DocTab $on><DocName>Drawing1</DocName><button aria-label="关闭 Drawing1"><Cross s={9} /></button></DocTab>
          <AddTab aria-label="新图形"><Plus /></AddTab>
        </DocTabs>
        <DrawingArea />
        <BottomBar>
          <LayoutTabs>
            <LayoutTab $on>模型</LayoutTab>
            <LayoutTab>布局1</LayoutTab>
            <LayoutTab>布局2</LayoutTab>
            <AddLayout aria-label="新建布局"><Plus s={8} /></AddLayout>
          </LayoutTabs>
          <Status />
        </BottomBar>
      </Main>
    </Frame>
  );
}
